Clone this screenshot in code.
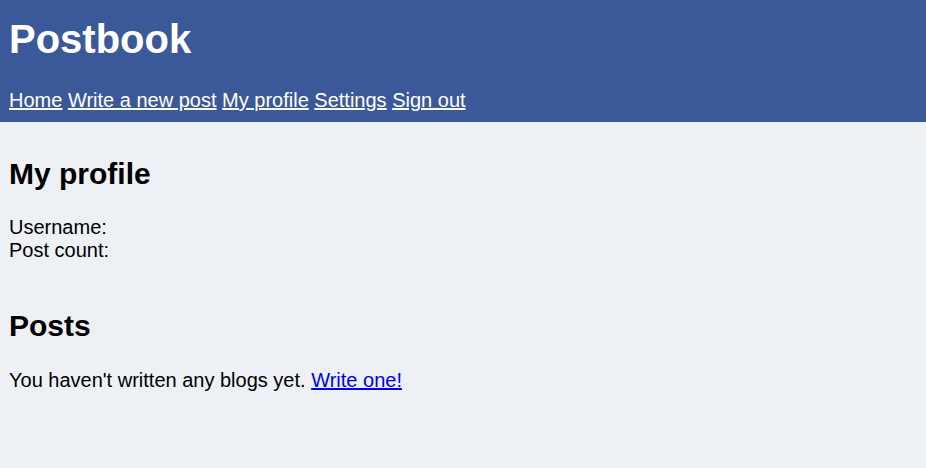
export default function App() {
  const links = ["Home", "Write a new post", "My profile", "Settings", "Sign out"];

  return (
    <div className="min-h-screen bg-[#edf0f5] text-[20px] leading-[23px] text-black [font-family:'Liberation_Sans',Arial,sans-serif]">
      <header className="bg-[#3b5998] px-[9px] pt-[16px] pb-[10px] text-white">
        <h1 className="mb-[27px] text-[40px] leading-[46px] font-bold">Postbook</h1>
        <nav>
          {links.map((l, i) => (
            <span key={l}>
              <a href="#" className="text-white underline">
                {l}
              </a>
              {i < links.length - 1 && " "}
            </span>
          ))}
        </nav>
      </header>

      <main className="px-[9px]">
        <h2 className="pt-[35px] mb-[25px] text-[30px] leading-[34px] font-bold">My profile</h2>
        <div>Username:</div>
        <div>Post count:</div>

        <h2 className="mt-[47px] mb-[26px] text-[30px] leading-[34px] font-bold">Posts</h2>
        <p>
          You haven't written any blogs yet.{" "}
          <a href="#" className="text-[#0000ee] underline">
            Write one!
          </a>
        </p>
      </main>
    </div>
  );
}
